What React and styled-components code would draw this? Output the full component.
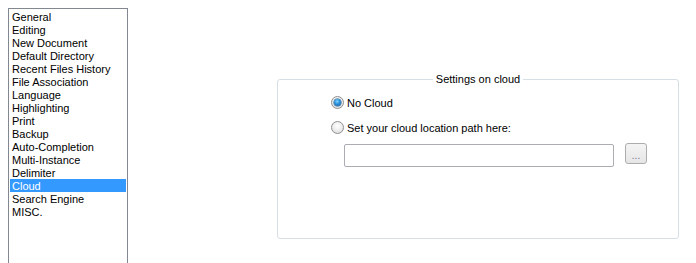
import React from "react";
import styled, { createGlobalStyle } from "styled-components";

const Global = createGlobalStyle`
  html, body { margin: 0; padding: 0; background: #ffffff; overflow: hidden; }
  body { font-family: "Liberation Sans", Arial, sans-serif; font-size: 11px; color: #000; }
`;

const Page = styled.div`
  display: flex;
  align-items: flex-start;
  padding: 8px 0 0 8px;
  width: 696px;
  height: 263px;
  box-sizing: border-box;
  overflow: hidden;
`;

const List = styled.ul`
  list-style: none;
  margin: 0;
  padding: 1px;
  width: 120px;
  height: 255px;
  box-sizing: border-box;
  border: 1px solid #828790;
  border-bottom: none;
  background: #fff;
  flex-shrink: 0;
`;

const Item = styled.li`
  height: 13px;
  line-height: 14px;
  padding-left: 2px;
  white-space: nowrap;
  background: ${(p) => (p.$selected ? "#3399ff" : "transparent")};
  color: ${(p) => (p.$selected ? "#ffffff" : "#000000")};
`;

const Group = styled.fieldset`
  margin: 65px 0 0 149px;
  padding: 0;
  width: 402px;
  height: 166px;
  box-sizing: border-box;
  border: 1px solid #d5dfe5;
  border-radius: 3px;
  min-width: 0;
`;

const Legend = styled.legend`
  margin: 0 auto;
  padding: 0 3px;
  font-size: 11px;
  line-height: 13px;
  color: #000;
`;

const Body = styled.div`
  display: flex;
  flex-direction: column;
  padding: 10px 0 0 53px;
`;

const RadioRow = styled.label`
  display: flex;
  align-items: center;
  gap: 3px;
  height: 13px;
  line-height: 14px;
  margin-bottom: ${(p) => p.$mb || 0}px;
`;

const RadioCircle = styled.span`
  position: relative;
  width: 13px;
  height: 13px;
  box-sizing: border-box;
  border-radius: 50%;
  border: 1px solid #8f8f8f;
  background: radial-gradient(circle at 50% 35%, #ffffff 0%, #ececec 55%, #d6d6d6 100%);
  flex-shrink: 0;
  ${(p) =>
    p.$checked &&
    `
    &::after {
      content: "";
      position: absolute;
      left: 2px;
      top: 2px;
      width: 7px;
      height: 7px;
      border-radius: 50%;
      background: radial-gradient(circle at 45% 35%, #7fd3ff 0%, #2a8fd8 45%, #0d4f8f 100%);
      box-shadow: 0 0 0 0.5px #1b5a93;
    }
  `}
`;

const PathRow = styled.div`
  display: flex;
  align-items: flex-start;
  gap: 11px;
  margin-left: 13px;
`;

const Input = styled.input`
  width: 270px;
  height: 23px;
  box-sizing: border-box;
  border: 1px solid #abadb3;
  border-radius: 2px;
  background: #fff;
  margin: 1px 0 0 0;
  padding: 0 3px;
  font-family: inherit;
  font-size: 11px;
  outline: none;
`;

const Browse = styled.button`
  width: 22px;
  height: 21px;
  box-sizing: border-box;
  border: 1px solid #acacac;
  border-radius: 3px;
  background: linear-gradient(#f4f4f4, #e6e6e6);
  color: #7a6f9a;
  font-family: inherit;
  font-size: 10px;
  line-height: 1;
  padding: 4px 0 0 0;
  margin: 0;
  letter-spacing: 0;
`;

const items = [
  "General",
  "Editing",
  "New Document",
  "Default Directory",
  "Recent Files History",
  "File Association",
  "Language",
  "Highlighting",
  "Print",
  "Backup",
  "Auto-Completion",
  "Multi-Instance",
  "Delimiter",
  "Cloud",
  "Search Engine",
  "MISC.",
];

export default function App() {
  return (
    <>
      <Global />
      <Page>
        <List>
          {items.map((t) => (
            <Item key={t} $selected={t === "Cloud"}>
              {t}
            </Item>
          ))}
        </List>
        <Group>
          <Legend>Settings on cloud</Legend>
          <Body>
            <RadioRow $mb={12}>
              <RadioCircle $checked />
              No Cloud
            </RadioRow>
            <RadioRow $mb={9}>
              <RadioCircle />
              Set your cloud location path here:
            </RadioRow>
            <PathRow>
              <Input type="text" />
              <Browse>...</Browse>
            </PathRow>
          </Body>
        </Group>
      </Page>
    </>
  );
}
